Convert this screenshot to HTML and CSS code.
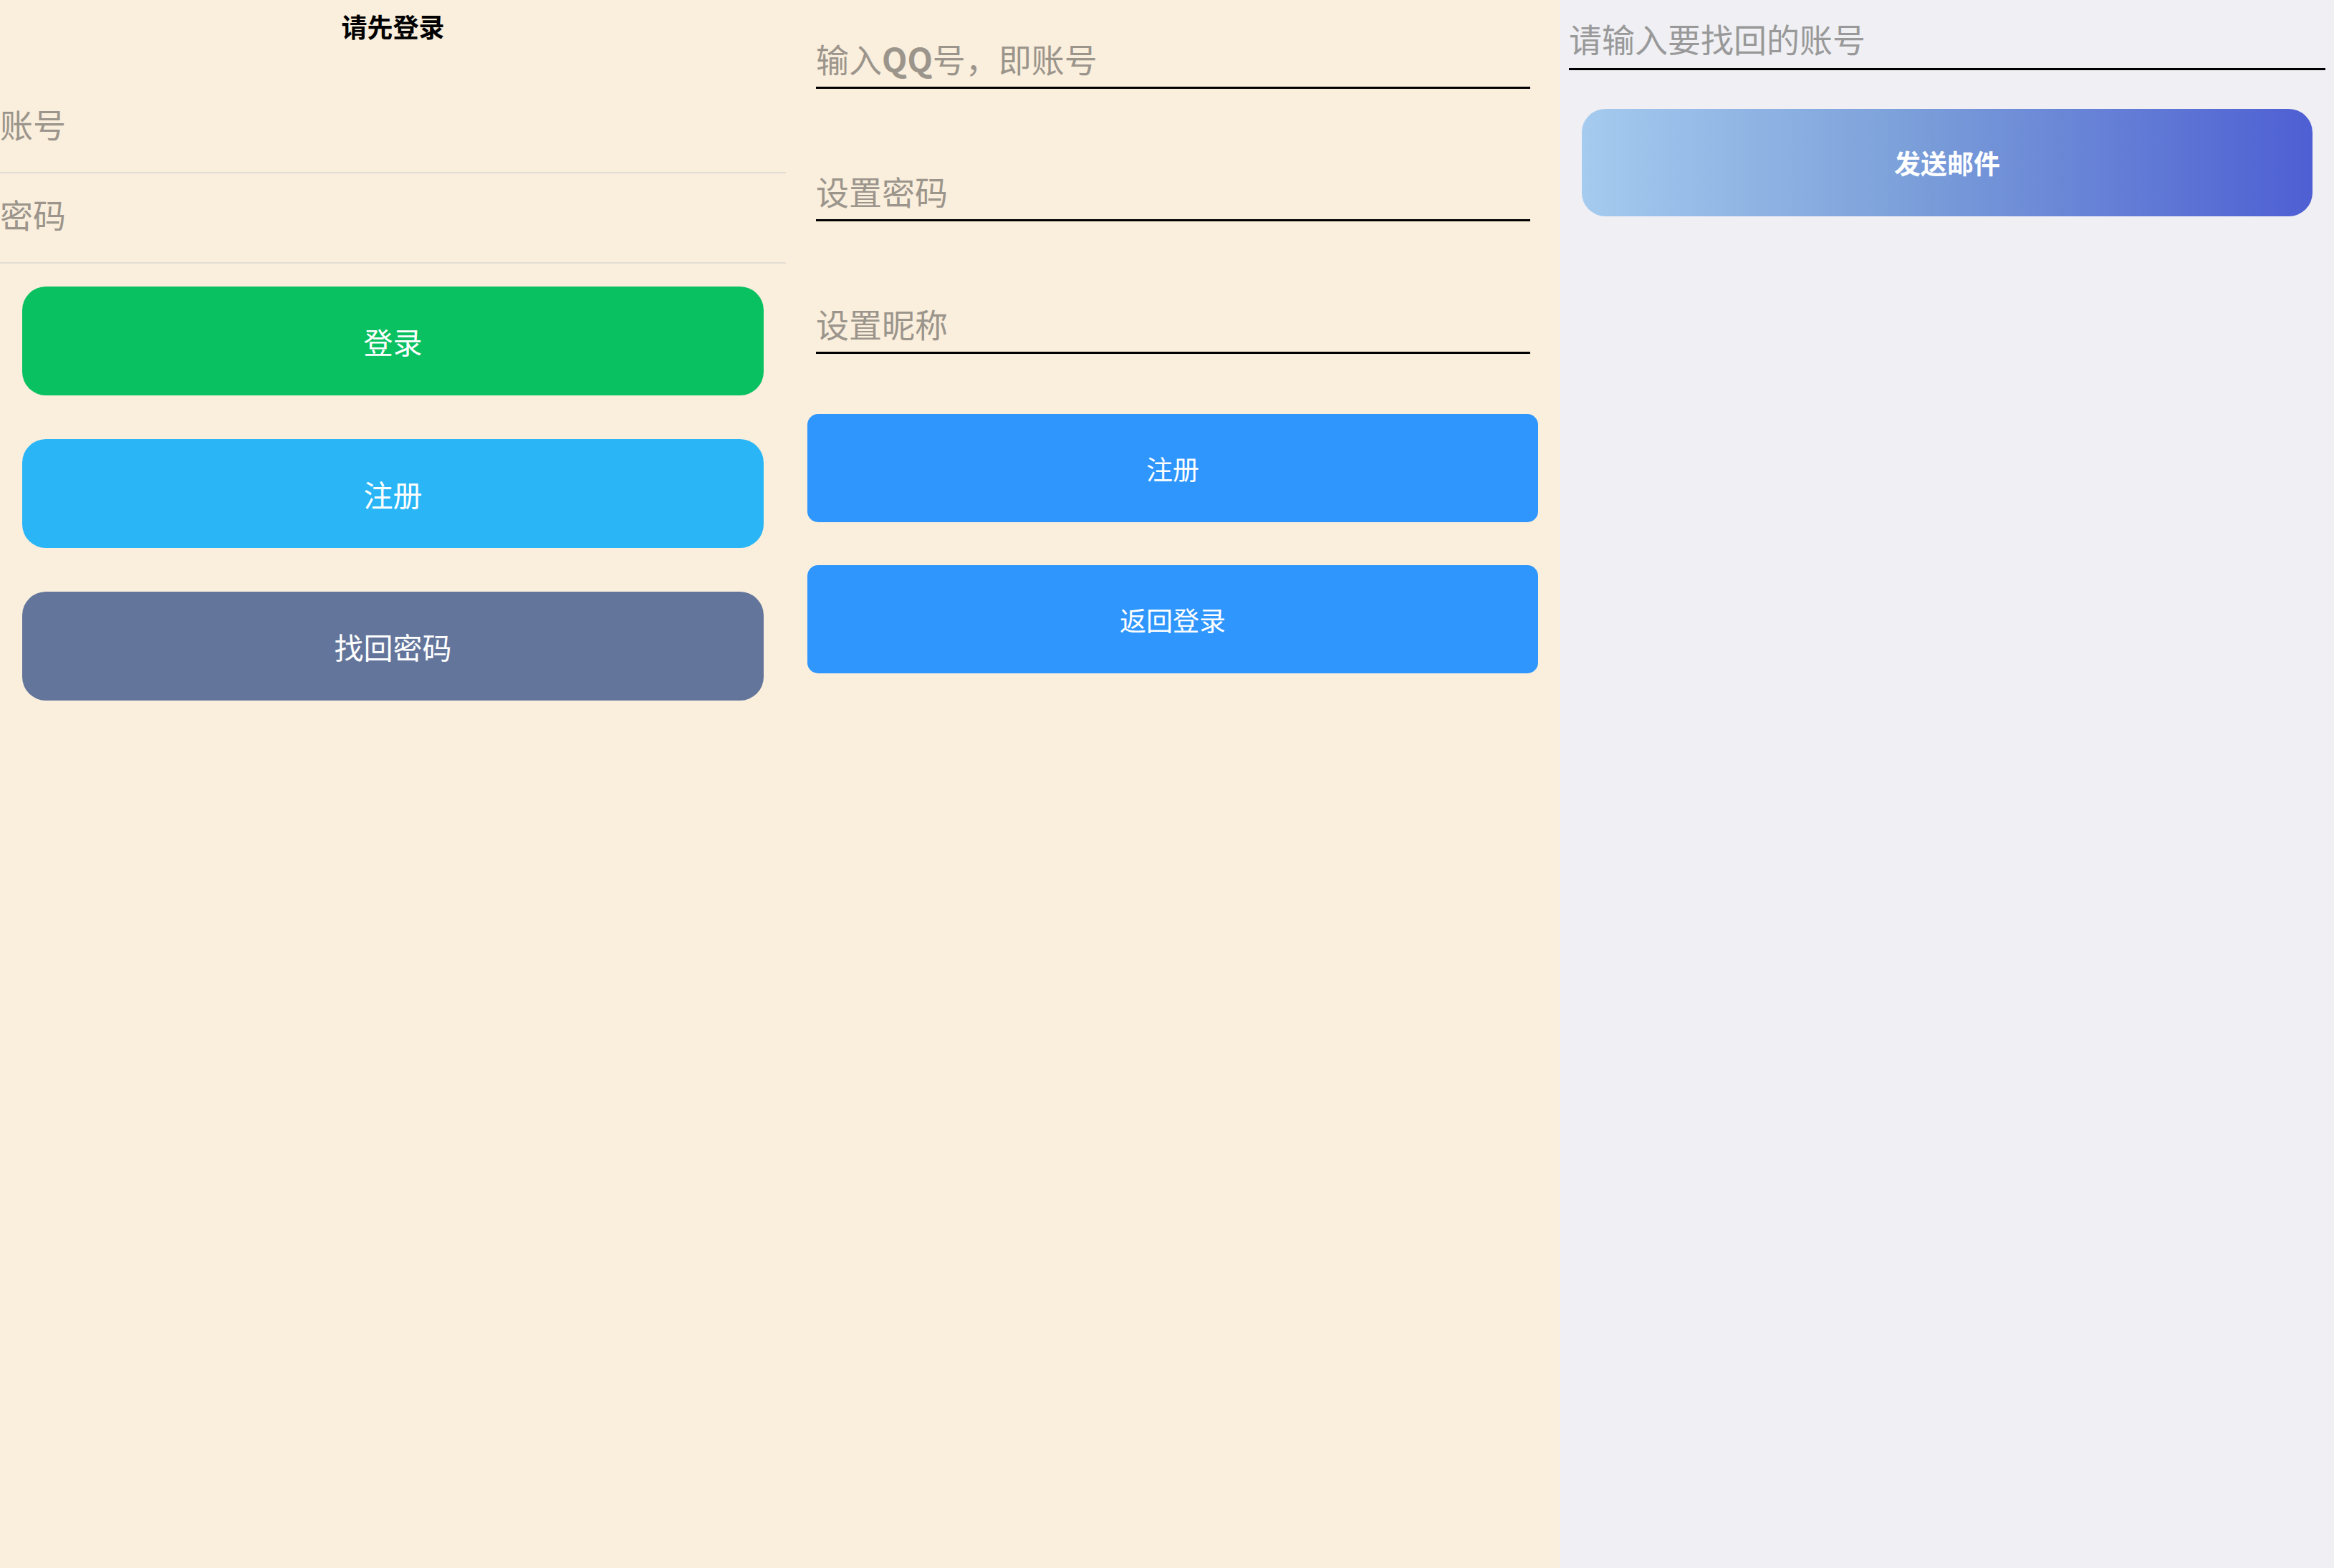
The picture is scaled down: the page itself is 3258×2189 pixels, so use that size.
FILE: index.html
```html
<!DOCTYPE html>
<html lang="zh-CN">
<head>
<meta charset="utf-8">
<title>登录</title>
<link rel="stylesheet" href="styles.css">
</head>
<body>
<div class="screens">
  <section class="panel panel-login">
    <h1 class="title">请先登录</h1>
    <div class="cell"><span class="ph">账号</span></div>
    <div class="cell"><span class="ph">密码</span></div>
    <div class="btns btns-login">
      <div class="btn btn-round btn-green">登录</div>
      <div class="btn btn-round btn-sky">注册</div>
      <div class="btn btn-round btn-slate">找回密码</div>
    </div>
  </section>

  <section class="panel panel-register">
    <div class="fields">
      <div class="field"><span class="ph">输入<b class="qq">QQ</b>号，即账号</span></div>
      <div class="field"><span class="ph">设置密码</span></div>
      <div class="field"><span class="ph">设置昵称</span></div>
    </div>
    <div class="btns btns-register">
      <div class="btn btn-blue">注册</div>
      <div class="btn btn-blue">返回登录</div>
    </div>
  </section>

  <section class="panel panel-find">
    <div class="field field-find"><span class="ph ph-grey">请输入要找回的账号</span></div>
    <div class="btn btn-round btn-gradient">发送邮件</div>
  </section>
</div>
</body>
</html>
```

FILE: styles.css
```css
* { box-sizing: border-box; }
html, body {
  margin: 0;
  padding: 0;
  height: 100%;
}
body {
  font-family: "Noto Sans CJK SC", "Noto Sans", sans-serif;
  background: #faeedc;
}
.screens {
  display: grid;
  grid-template-columns: 1097px 1081px 1fr;
  height: 100vh;
}
.panel {
  display: flex;
  flex-direction: column;
  background: #faeedc;
}
.panel-find {
  background: #efeff4;
}

/* login */
.title {
  margin: 0 0 40px;
  height: 76px;
  line-height: 72px;
  text-align: center;
  font-size: 36px;
  font-weight: 700;
  color: #000;
}
.cell {
  height: 126px;
  border-bottom: 2px solid #e2ddd4;
  display: flex;
  align-items: center;
  padding-bottom: 12px;
}
.ph {
  font-size: 46px;
  color: #9b958c;
  line-height: 1;
}
.ph-grey { color: #999999; }
.qq { font-weight: 700; }

.btns {
  display: flex;
  flex-direction: column;
}
.btns-login {
  padding: 32px 31px 0;
  gap: 61px;
}
.btn {
  display: flex;
  align-items: center;
  justify-content: center;
  color: #fff;
}
.btn-round {
  height: 152px;
  border-radius: 33px;
  font-size: 41px;
}
.btn-green { background: #0ac161; }
.btn-sky { background: #2ab6f6; }
.btn-slate { background: #63759b; }

/* register */
.fields {
  display: flex;
  flex-direction: column;
  padding: 49px 42px 0;
  gap: 110px;
}
.field {
  height: 75px;
  border-bottom: 3px solid #000;
  display: flex;
  align-items: center;
  padding-bottom: 8px;
}
.btns-register {
  padding: 84px 31px 0 30px;
  gap: 60px;
}
.btn-blue {
  height: 151px;
  border-radius: 15px;
  background: #2e96fd;
  font-size: 37px;
}

/* find password */
.field-find {
  margin: 22px 12px 0;
  height: 76px;
  border-bottom-width: 3px;
  padding-bottom: 12px;
}
.btn-gradient {
  margin: 54px 30px 0;
  height: 150px;
  font-size: 37px;
  font-weight: 700;
  background: linear-gradient(90deg, #a5cbef 0%, #7b9fd9 45%, #4e5fd3 100%);
}
```
